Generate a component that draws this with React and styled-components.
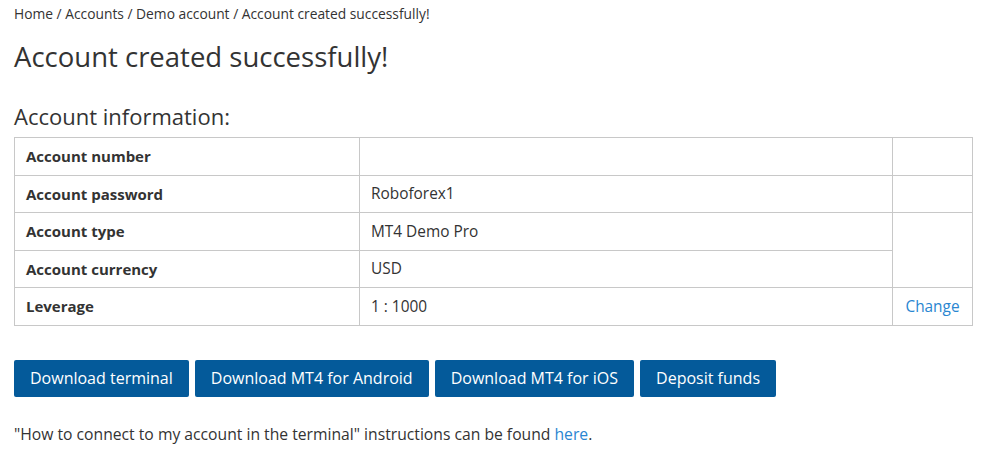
import React from 'react';
import styled, { createGlobalStyle } from 'styled-components';

const GlobalStyle = createGlobalStyle`
  body {
    margin: 0;
    background: #fff;
    color: #333;
    font-family: 'Open Sans', 'Noto Sans', sans-serif;
  }
`;

const Page = styled.div`
  padding: 4px 14px 0 14px;
`;

const Crumbs = styled.div`
  font-size: 13.8px;
  line-height: 20px;
  color: #333;
`;

const Title = styled.h1`
  font-size: 27.5px;
  font-weight: 400;
  line-height: 36px;
  margin: 15px 0 0 0;
  color: #333;
`;

const SubTitle = styled.h2`
  font-size: 22px;
  font-weight: 400;
  line-height: 28px;
  margin: 27px 0 7px 0;
  color: #333;
`;

const Table = styled.table`
  width: 959px;
  border-collapse: collapse;
  font-size: 15.4px;
`;

const Cell = styled.td`
  border: 1px solid #c8c8c8;
  height: 36.5px;
  padding: 0 11px;
  font-weight: ${(p) => (p.$label ? 700 : 400)};
  font-size: ${(p) => (p.$label ? '15px' : 'inherit')};
  width: ${(p) => p.$w || 'auto'};
  text-align: ${(p) => p.$align || 'left'};
  vertical-align: middle;
`;

const Link = styled.a`
  color: #2a86d1;
  text-decoration: none;
`;

const Buttons = styled.div`
  display: flex;
  gap: 6px;
  margin-top: 34px;
`;

const Button = styled.button`
  height: 37px;
  padding: 0 16px;
  border: none;
  border-radius: 2px;
  background: #045a9a;
  color: #fff;
  font-family: inherit;
  font-size: 16px;
`;

const Note = styled.p`
  font-size: 15.7px;
  margin: 26px 0 0 0;
`;

const rows = [
  ['Account number', '', ''],
  ['Account password', 'Roboforex1', ''],
  ['Account type', 'MT4 Demo Pro', 'span'],
  ['Account currency', 'USD', null],
  ['Leverage', '1 : 1000', 'change'],
];

export default function App() {
  return (
    <Page>
      <GlobalStyle />
      <Crumbs>Home / Accounts / Demo account / Account created successfully!</Crumbs>
      <Title>Account created successfully!</Title>
      <SubTitle>Account information:</SubTitle>
      <Table>
        <tbody>
          {rows.map(([label, value, extra]) => (
            <tr key={label}>
              <Cell $label $w="322px">{label}</Cell>
              <Cell>{value}</Cell>
              {extra === '' && <Cell $w="57px" />}
              {extra === 'span' && <Cell $w="57px" rowSpan={2} />}
              {extra === 'change' && (
                <Cell $w="57px" $align="center">
                  <Link href="#">Change</Link>
                </Cell>
              )}
            </tr>
          ))}
        </tbody>
      </Table>
      <Buttons>
        <Button>Download terminal</Button>
        <Button>Download MT4 for Android</Button>
        <Button>Download MT4 for iOS</Button>
        <Button>Deposit funds</Button>
      </Buttons>
      <Note>
        "How to connect to my account in the terminal" instructions can be found{' '}
        <Link href="#">here</Link>.
      </Note>
    </Page>
  );
}
